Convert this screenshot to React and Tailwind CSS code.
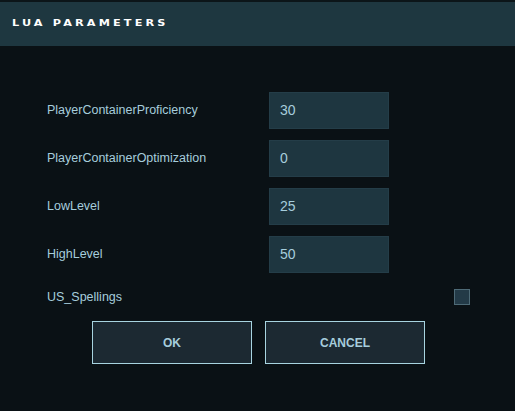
const params = [
  { label: 'PlayerContainerProficiency', value: '30' },
  { label: 'PlayerContainerOptimization', value: '0' },
  { label: 'LowLevel', value: '25' },
  { label: 'HighLevel', value: '50' },
]

export default function App() {
  return (
    <div className="w-[515px] h-[411px] bg-[#0a1115] border-t-2 border-[#0c1519] flex flex-col font-['DejaVu_Sans',sans-serif] overflow-hidden">
      <div className="h-[44px] bg-[#1e3740] flex items-center pl-[12px]">
        <span className="text-white text-[9px] font-bold tracking-[0.28em] scale-x-125 origin-left">LUA PARAMETERS</span>
      </div>

      <div className="flex flex-col pt-[46px] gap-[11px]">
        {params.map(p => (
          <div key={p.label} className="flex items-center">
            <div className="w-[269px] pl-[47px] text-[12.5px] text-[#a6cddc] font-['Liberation_Sans',sans-serif]">{p.label}</div>
            <div className="w-[120px] h-[37px] bg-[#1e3640] border border-[#243d48] flex items-center pl-[10px] text-[14px] text-[#a6cddc] font-['Liberation_Sans',sans-serif]">
              {p.value}
            </div>
          </div>
        ))}
      </div>

      <div className="flex items-center mt-[16px] h-[16px]">
        <div className="w-[454px] pl-[47px] text-[12.5px] text-[#a6cddc] font-['Liberation_Sans',sans-serif]">US_Spellings</div>
        <div className="w-[16px] h-[16px] border border-[#4e6a76] bg-[#233a47]" />
      </div>

      <div className="flex gap-[13px] pl-[92px] mt-[16px]">
        {['OK', 'CANCEL'].map(t => (
          <button key={t} className="w-[160px] h-[43px] bg-[#1c2932] border border-[#a8d4e0] text-[#a6cddc] text-[12px] font-bold font-['Liberation_Sans',sans-serif]">
            {t}
          </button>
        ))}
      </div>
    </div>
  )
}
